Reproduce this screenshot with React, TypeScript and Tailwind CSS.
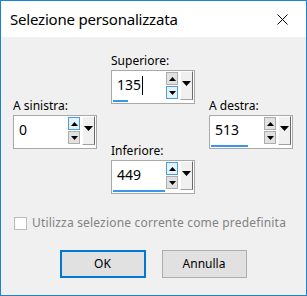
import React from 'react';

interface SpinProps {
  value: string;
  bar?: number;
  hover?: 'up' | 'down' | null;
  caret?: boolean;
}

const UpArrow = () => (
  <svg width="7" height="4" viewBox="0 0 7 4">
    <path d="M0 4 L3.5 0 L7 4 Z" fill="#000" />
  </svg>
);

const DownArrow = () => (
  <svg width="7" height="4" viewBox="0 0 7 4">
    <path d="M0 0 L7 0 L3.5 4 Z" fill="#000" />
  </svg>
);

const SpinBox: React.FC<SpinProps> = ({ value, bar = 0, hover = null, caret = false }) => {
  const btn = (active: boolean) =>
    active
      ? 'w-[12px] h-[13px] flex items-center justify-center border border-[#4a9de0] bg-[#e5f1fb]'
      : 'w-[12px] h-[13px] flex items-center justify-center border border-[#adadad] bg-[#e1e1e1]';
  return (
    <div className="w-[84px] h-[34px] border border-[#a9a9a9] bg-white flex flex-col">
      <div className="flex items-start h-[29px]">
        <div className="flex-1 flex items-center h-[28px] pl-[5px] text-[14px] leading-none text-black">
          <span>{value}</span>
          {caret && <span className="ml-[1px] w-[1px] h-[19px] bg-black" />}
        </div>
        <div className="flex flex-col gap-[1px] mt-[1px]">
          <div className={btn(hover === 'up')}>
            <UpArrow />
          </div>
          <div className={btn(hover === 'down')}>
            <DownArrow />
          </div>
        </div>
        <div className="ml-[2px] mr-[1px] w-[13px] h-[29px] bg-[#f0f0f0] border-l border-t border-l-white border-t-white border-r border-b border-r-[#696969] border-b-[#a0a0a0] flex justify-center pt-[9px]">
          <svg width="9" height="5" viewBox="0 0 9 5">
            <path d="M0 0 L9 0 L4.5 5 Z" fill="#000" />
          </svg>
        </div>
      </div>
      <div className="mt-auto mb-[1px] ml-[1px] h-[2px] bg-[#3a96ea]" style={{ width: bar }} />
    </div>
  );
};

const Field: React.FC<{ label: string } & SpinProps> = ({ label, ...rest }) => (
  <div className="flex flex-col">
    <div className="text-[12px] leading-[16px] text-black">{label}</div>
    <div className="mt-[1px]">
      <SpinBox {...rest} />
    </div>
  </div>
);

export default function App() {
  return (
    <div
      className="w-[307px] h-[296px] border border-[#1883d7] bg-[#f0f0f0] flex flex-col overflow-hidden"
      style={{ fontFamily: '"Noto Sans", "Open Sans", sans-serif' }}
    >
      <div className="h-[36px] shrink-0 bg-white flex items-center justify-between pl-[9px] pr-[18px]">
        <span className="text-[15px] text-black tracking-[-0.2px]">Selezione personalizzata</span>
        <svg width="11" height="11" viewBox="0 0 11 11">
          <path d="M0.5 0.5 L10.5 10.5 M10.5 0.5 L0.5 10.5" stroke="#000" strokeWidth="1" />
        </svg>
      </div>

      <div className="flex gap-[14px] pl-[12px] pt-[16px]">
        <div className="pt-[45px]">
          <Field label="A sinistra:" value="0" hover="up" />
        </div>
        <div className="flex flex-col gap-[39px]">
          <Field label="Superiore:" value="135" bar={15} hover="down" caret />
          <Field label="Inferiore:" value="449" bar={52} hover="up" />
        </div>
        <div className="pt-[45px]">
          <Field label="A destra:" value="513" bar={37} />
        </div>
      </div>

      <div className="flex items-center gap-[5px] pl-[13px] mt-[21px]">
        <div className="w-[13px] h-[13px] border border-[#bcbcbc] bg-white" />
        <span className="text-[12px] leading-[16px] tracking-[0.18px] text-[#838383]">
          Utilizza selezione corrente come predefinita
        </span>
      </div>

      <div className="flex justify-center gap-[16px] mt-[19px] pr-[1px]">
        <button className="w-[86px] h-[28px] border-2 border-[#0078d7] bg-[#e1e1e1] text-[12px] text-black">
          OK
        </button>
        <button className="w-[85px] h-[28px] border border-[#adadad] bg-[#e1e1e1] text-[12px] text-black">
          Annulla
        </button>
      </div>
    </div>
  );
}
